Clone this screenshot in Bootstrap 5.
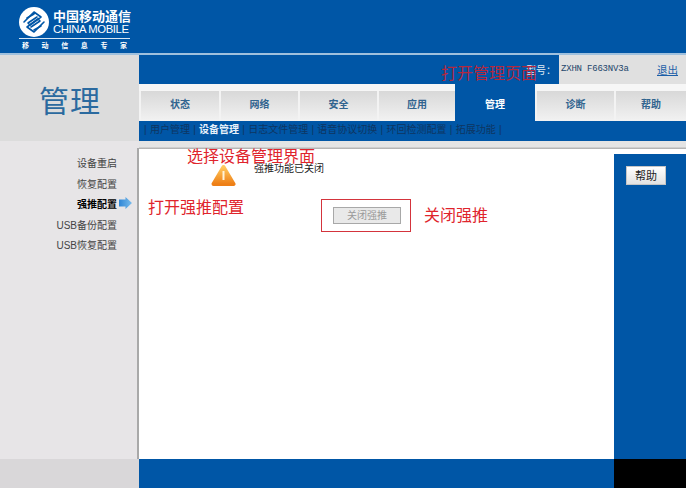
<!DOCTYPE html>
<html lang="zh-CN">
<head>
  <meta charset="UTF-8">
  <title>管理</title>
  <link rel="stylesheet" href="https://cdn.jsdelivr.net/npm/bootstrap@5.3.0/dist/css/bootstrap.min.css">
  <style>
    html, body { height: 100%; }
    body {
      position: relative;
      width: 686px;
      height: 488px;
      overflow: hidden;
      background: #fff;
      font-family: "Liberation Sans", "Noto Sans CJK SC", sans-serif;
      font-size: 10px;
      line-height: 1.2;
      color: #222;
    }
    .top-bar { height: 55px; background: #0056a6; border-bottom: 2px solid #9fc0dd; }
    .logo-box { width: 111px; margin-left: 19px; padding-top: 7px; color: #fff; }
    .logo-text { padding-top: 3px; }
    .logo-cn { font-size: 13px; line-height: 14px; font-weight: 700; white-space: nowrap; }
    .logo-en { font-size: 11.3px; line-height: 11px; letter-spacing: -.4px; white-space: nowrap; }
    .logo-sub { margin-top: 1px; border-top: 1px solid #d7e6f3; padding: 2px 3px 0; font-size: 7px; line-height: 9px; font-weight: 700; }
    .main-row { height: 404px; }
    .side-col { width: 139px; background: #e7e5e7; }
    .title-box { height: 86px; background: #dcdcdc; padding-top: 24px; padding-left: 1px; text-align: center; font-size: 30px; line-height: 40px; letter-spacing: 1px; color: #2b6a9f; font-family: "Noto Sans CJK SC", sans-serif; font-weight: 400; }
    .side-menu { margin-top: 7px; padding-top: 7px; padding-right: 20px; border-right: 2px solid #a9a9a9; text-align: right; font-size: 10px; color: #444; }
    .side-item { height: 20.5px; line-height: 17px; position: relative; white-space: nowrap; }
    .side-item.on { color: #000; font-weight: 700; }
    .side-arrow { position: absolute; left: 119px; top: 1px; }
    .info-bar { height: 29px; background: #0056a6; }
    .model-box { width: 127px; background: #e0e0e0; padding: 9px 8px 0 2px; white-space: nowrap; }
    .model-text { font-family: "Liberation Mono", monospace; font-size: 9px; letter-spacing: -.2px; color: #24466b; }
    .logout { color: #1c5fa8; font-size: 10.5px; text-decoration: underline; }
    .tab-bar { height: 37px; background: #f6f6f6; padding-top: 7px; }
    .tab-item { height: 30px; line-height: 27px; text-align: center; font-size: 10px; font-weight: 700; color: #31648f; background: linear-gradient(#d8d8d8, #f2f2f2); border-left: 2px solid #f3f3f3; }
    .tab-item.on { height: 37px; margin-top: -7px; line-height: 41px; background: #0056a6; color: #fff; border-left: 0; }
    .sub-bar { height: 20px; background: #0056a6; padding-left: 5px; line-height: 18px; font-size: 10px; word-spacing: .5px; color: #0e3561; white-space: nowrap; }
    .sub-bar b { color: #e8f1fa; }
    .strip { height: 8px; background: linear-gradient(#e4e4e4 70%, #a8a8a8); }
    .work-row { height: 310px; }
    .work-area { width: 475px; background: #fff; position: relative; }
    .help-col { width: 72px; margin-top: 5px; background: #0056a6; padding: 12px 0 0 12px; }
    .help-btn { width: 40px; height: 19px; padding: 0; border: 1px solid #c5c5c5; border-radius: 0; background: linear-gradient(#fff, #e2e2e2); font-size: 11px; line-height: 16px; color: #222; }
    .off-text { position: absolute; left: 115px; top: 15px; font-size: 10px; line-height: 10px; color: #222; }
    .warn-icon { position: absolute; left: 72px; top: 15px; }
    .close-btn { position: absolute; left: 194px; top: 58px; width: 68px; height: 17px; padding: 0; border: 1px solid #a8a8a8; border-radius: 0; background: #e9e9e9; font-size: 10px; line-height: 14px; color: #9a9a9a; }
    .foot-row { height: 29px; }
    .foot-side { width: 139px; background: #d9d7d9; }
    .foot-main { width: 475px; background: #0056a6; }
    .foot-end { width: 72px; background: #000; }
    .note { position: absolute; color: #e0242c; font-size: 16px; line-height: 16px; white-space: nowrap; font-family: "Noto Sans CJK SC", sans-serif; }
    .note-box { position: absolute; left: 321px; top: 199px; width: 90px; height: 33px; border: 1.5px solid #d4343c; }
  </style>
</head>
<body>
  <div class="top-bar d-flex">
    <div class="logo-box d-flex flex-column">
      <div class="d-flex gap-1">
        <svg width="30" height="30" viewBox="0 0 30 30" class="flex-shrink-0">
          <circle cx="15" cy="15" r="15" fill="#fff"/>
          <g fill="none" stroke="#0056a6" stroke-width="1.6" stroke-linejoin="round" stroke-linecap="round">
            <path d="M5 15 15 5l7 5-11 8-2-2 9-6"/>
            <path d="M8 11 15 7"/>
            <path d="M25 15 15 25l-7-5 11-8 2 2-9 6"/>
            <path d="M22 19 15 23"/>
          </g>
        </svg>
        <div class="logo-text">
          <div class="logo-cn">中国移动通信</div>
          <div class="logo-en">CHINA MOBILE</div>
        </div>
      </div>
      <div class="logo-sub d-flex justify-content-between"><span>移</span><span>动</span><span>信</span><span>息</span><span>专</span><span>家</span></div>
    </div>
  </div>

  <div class="main-row d-flex">
    <div class="side-col flex-shrink-0 d-flex flex-column">
      <div class="title-box">管理</div>
      <div class="side-menu flex-grow-1">
        <div class="side-item">设备重启</div>
        <div class="side-item">恢复配置</div>
        <div class="side-item on">强推配置
          <svg class="side-arrow" width="13" height="12" viewBox="0 0 13 12">
            <defs><linearGradient id="arrowFill" x1="0" y1="0" x2="1" y2="0"><stop offset="0" stop-color="#2f86d6"/><stop offset="1" stop-color="#79bcec"/></linearGradient></defs>
            <path d="M0 2.500h6.500V0L13 6l-6.500 6V9.500H0z" fill="url(#arrowFill)"/>
          </svg>
        </div>
        <div class="side-item">USB备份配置</div>
        <div class="side-item">USB恢复配置</div>
      </div>
    </div>

    <div class="flex-grow-1 d-flex flex-column">
      <div class="info-bar d-flex justify-content-end">
        <div class="model-box d-flex justify-content-between">
          <span class="model-text">ZXHN F663NV3a</span>
          <a class="logout" href="#">退出</a>
        </div>
      </div>
      <div class="tab-bar d-flex">
        <div class="tab-item" style="width:80px">状态</div>
        <div class="tab-item" style="width:79px">网络</div>
        <div class="tab-item" style="width:79px">安全</div>
        <div class="tab-item" style="width:78px">应用</div>
        <div class="tab-item on" style="width:80px">管理</div>
        <div class="tab-item" style="width:79px">诊断</div>
        <div class="tab-item" style="width:72px">帮助</div>
      </div>
      <div class="sub-bar">| 用户管理 | <b>设备管理</b> | 日志文件管理 | 语音协议切换 | 环回检测配置 | 拓展功能 |</div>
      <div class="strip"></div>
      <div class="work-row d-flex">
        <div class="work-area">
          <svg class="warn-icon" width="25" height="23" viewBox="0 0 25 23">
            <defs><linearGradient id="warnFill" x1="0" y1="0" x2="0" y2="1"><stop offset="0" stop-color="#ffc95e"/><stop offset="1" stop-color="#ee7f16"/></linearGradient></defs>
            <path d="M12.500 3 22.500 20H2.500z" fill="url(#warnFill)" stroke="url(#warnFill)" stroke-width="4" stroke-linejoin="round"/>
            <rect x="11.500" y="7" width="2" height="9" fill="#fff3d8"/>
          </svg>
          <div class="off-text">强推功能已关闭</div>
          <button class="close-btn" type="button">关闭强推</button>
        </div>
        <div class="help-col">
          <button class="help-btn" type="button">帮助</button>
        </div>
      </div>
    </div>
  </div>

  <div class="foot-row d-flex">
    <div class="foot-side"></div>
    <div class="foot-main"></div>
    <div class="foot-end"></div>
  </div>

  <!-- 标注 -->
  <div class="note" style="left:526px;top:64px;font-size:10px;line-height:12px;color:#dfe9f3">型号：</div>
  <div class="note" style="left:441px;top:64px;color:#b3283f">打开管理页面</div>
  <div class="note" style="left:187px;top:147px">选择设备管理界面</div>
  <div class="note" style="left:148px;top:198px">打开强推配置</div>
  <div class="note" style="left:424px;top:206px">关闭强推</div>
  <div class="note-box"></div>
</body>
</html>
